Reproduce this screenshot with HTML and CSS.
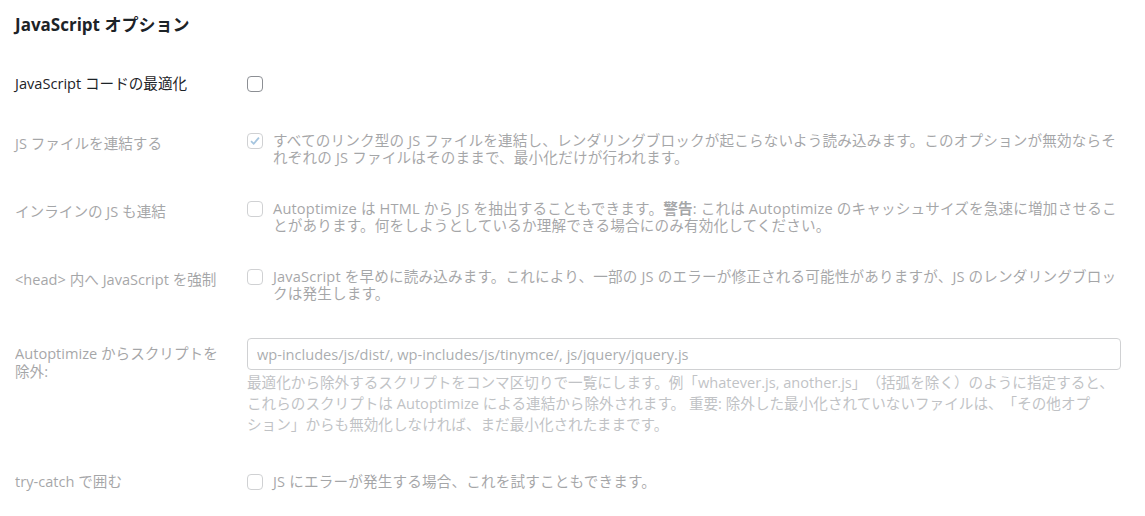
FILE: index.html
```html
<!DOCTYPE html>
<html lang="ja">
<head>
    <meta charset="UTF-8">
    <meta name="viewport" content="width=device-width, initial-scale=1.0">
    <title>JavaScript オプション</title>
    <link rel="stylesheet" href="styles.css">
</head>
<body>
    <div class="wrap">
        <h2>JavaScript オプション</h2>
        <table class="form-table">
            <tr>
                <th>JavaScript コードの最適化</th>
                <td><input type="checkbox" id="js-opt"></td>
            </tr>
            <tr class="disabled">
                <th>JS ファイルを連結する</th>
                <td>
                    <label class="check-row">
                        <input type="checkbox" checked disabled>
                        <span>すべてのリンク型の JS ファイルを連結し、レンダリングブロックが起こらないよう読み込みます。このオプションが無効ならそれぞれの JS ファイルはそのままで、最小化だけが行われます。</span>
                    </label>
                </td>
            </tr>
            <tr class="disabled">
                <th>インラインの JS も連結</th>
                <td>
                    <label class="check-row">
                        <input type="checkbox" disabled>
                        <span>Autoptimize は HTML から JS を抽出することもできます。<strong>警告</strong>: これは Autoptimize のキャッシュサイズを急速に増加させることがあります。何をしようとしているか理解できる場合にのみ有効化してください。</span>
                    </label>
                </td>
            </tr>
            <tr class="disabled">
                <th>&lt;head&gt; 内へ JavaScript を強制</th>
                <td>
                    <label class="check-row">
                        <input type="checkbox" disabled>
                        <span>JavaScript を早めに読み込みます。これにより、一部の JS のエラーが修正される可能性がありますが、JS のレンダリングブロックは発生します。</span>
                    </label>
                </td>
            </tr>
            <tr class="disabled text-row">
                <th>Autoptimize からスクリプトを除外:</th>
                <td>
                    <input type="text" class="text-field" value="wp-includes/js/dist/, wp-includes/js/tinymce/, js/jquery/jquery.js" disabled>
                    <p class="description">最適化から除外するスクリプトをコンマ区切りで一覧にします。例「whatever.js, another.js」（括弧を除く）のように指定すると、これらのスクリプトは Autoptimize による連結から除外されます。 重要: 除外した最小化されていないファイルは、「その他オプ<br>ション」からも無効化しなければ、まだ最小化されたままです。</p>
                </td>
            </tr>
            <tr class="disabled last-row">
                <th>try-catch で囲む</th>
                <td>
                    <label class="check-row">
                        <input type="checkbox" disabled>
                        <span>JS にエラーが発生する場合、これを試すこともできます。</span>
                    </label>
                </td>
            </tr>
        </table>
    </div>
</body>
</html>
```

FILE: styles.css
```css
body {
    margin: 0;
    background-color: #fff;
    color: #1d2327;
    font-family: "Open Sans", "Noto Sans CJK JP", sans-serif;
    font-size: 14.6px;
    text-spacing-trim: space-all;
}
.wrap {
    padding: 0 24px 0 15px;
}
h2 {
    font-size: 17px;
    line-height: 22px;
    font-weight: 700;
    margin: 14px 0 23px;
}
.form-table {
    border-collapse: collapse;
    width: 100%;
}
.form-table th {
    width: 210px;
    padding: 19px 22px 17px 0;
    text-align: left;
    vertical-align: top;
    font-weight: 400;
    line-height: 18px;
}
.form-table td {
    padding: 17px 0;
    vertical-align: top;
    line-height: 17px;
}
.form-table tr:first-child th {
    padding-top: 15px;
}
.form-table tr:first-child td {
    padding-bottom: 23px;
}
.form-table .text-row th {
    padding-top: 25px;
}
.form-table .text-row td {
    padding-top: 19px;
    padding-bottom: 21px;
}
.form-table .last-row th {
    padding-top: 16px;
}
.disabled {
    opacity: 0.4;
}
input[type="checkbox"] {
    appearance: none;
    -webkit-appearance: none;
    display: block;
    width: 16px;
    height: 16px;
    margin: 0;
    border: 1px solid #8c8f94;
    border-radius: 4px;
    background-color: #fff;
    flex-shrink: 0;
}
input[type="checkbox"]:checked {
    background-image: url("data:image/svg+xml,%3Csvg xmlns='http://www.w3.org/2000/svg' viewBox='0 0 16 16'%3E%3Cpath d='M3.5 8.2l3 3 6-7' fill='none' stroke='%232271b1' stroke-width='2'/%3E%3C/svg%3E");
    background-repeat: no-repeat;
    background-position: center;
}
.check-row {
    display: flex;
    gap: 10px;
}
.check-row input {
    margin-top: 1px;
}
.check-row span {
    letter-spacing: 0.16px;
}
.text-field {
    display: block;
    box-sizing: border-box;
    width: 100%;
    height: 32px;
    padding: 0 9px;
    border: 1px solid #8c8f94;
    border-radius: 4px;
    background-color: #fff;
    color: #2c3338;
    font-family: inherit;
    font-size: 14.6px;
}
.description {
    margin: 2px 0 0;
    line-height: 21px;
    color: #646970;
}
```
